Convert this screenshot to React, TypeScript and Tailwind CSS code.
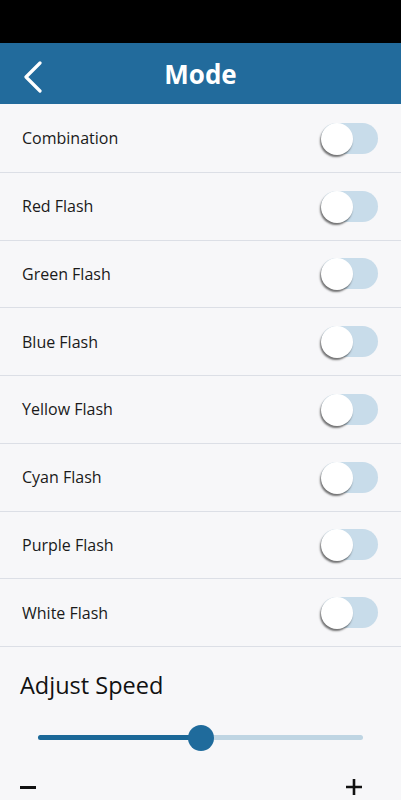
import React from "react";

const items = [
  "Combination",
  "Red Flash",
  "Green Flash",
  "Blue Flash",
  "Yellow Flash",
  "Cyan Flash",
  "Purple Flash",
  "White Flash",
];

function Toggle() {
  return (
    <div className="relative w-[57px] h-[31px] rounded-full bg-[#c8dcea]">
      <div className="absolute left-0 top-0 w-[32px] h-[32px] rounded-full bg-white shadow-[-1px_2px_2px_rgba(0,0,0,0.55)]" />
    </div>
  );
}

export default function App() {
  return (
    <div className="w-[401px] h-[800px] overflow-hidden bg-[#f7f7f9] flex flex-col" style={{ fontFamily: "'Open Sans', Lato, sans-serif" }}>
      <div className="h-[43px] bg-black shrink-0" />
      <div className="h-[61px] bg-[#226b9c] relative flex items-center justify-center shrink-0">
        <svg className="absolute left-[22px] top-[18px]" width="22" height="32" viewBox="0 0 22 32">
          <path d="M18 2 L4 16 L18 30" fill="none" stroke="white" strokeWidth="3.2" strokeLinecap="round" strokeLinejoin="round" />
        </svg>
        <span className="text-white text-[26px] font-bold leading-[32px]">Mode</span>
      </div>
      <div className="flex flex-col pt-[1px]">
        {items.map((t) => (
          <div key={t} className="h-[67.75px] border-b border-[#dcdfe6] flex items-center justify-between pl-[22px] pr-[23px]">
            <span className="text-[16px] text-[#1a1a1a]">{t}</span>
            <Toggle />
          </div>
        ))}
      </div>
      <div className="pl-[20px] pr-[20px] pt-[22px]">
        <div className="text-[23.5px] text-[#111] leading-[32px]">Adjust Speed</div>
        <div className="relative h-[30px] mt-[21px] mx-[18px]">
          <div className="absolute left-0 right-0 top-[13px] h-[5px] rounded-full bg-[#bfd5e3]" />
          <div className="absolute left-0 w-[163px] top-[13px] h-[5px] rounded-full bg-[#1b6898]" />
          <div className="absolute left-[150px] top-[3px] w-[26px] h-[26px] rounded-full bg-[#1f6b9c]" />
        </div>
        <div className="flex justify-between items-center mt-[26px] pr-[18px]">
          <span className="block w-[16px] h-[3px] bg-[#111]" />
          <svg width="18" height="18" viewBox="0 0 18 18">
            <path d="M9 1 V17 M1 9 H17" stroke="#111" strokeWidth="2.6" />
          </svg>
        </div>
      </div>
    </div>
  );
}
